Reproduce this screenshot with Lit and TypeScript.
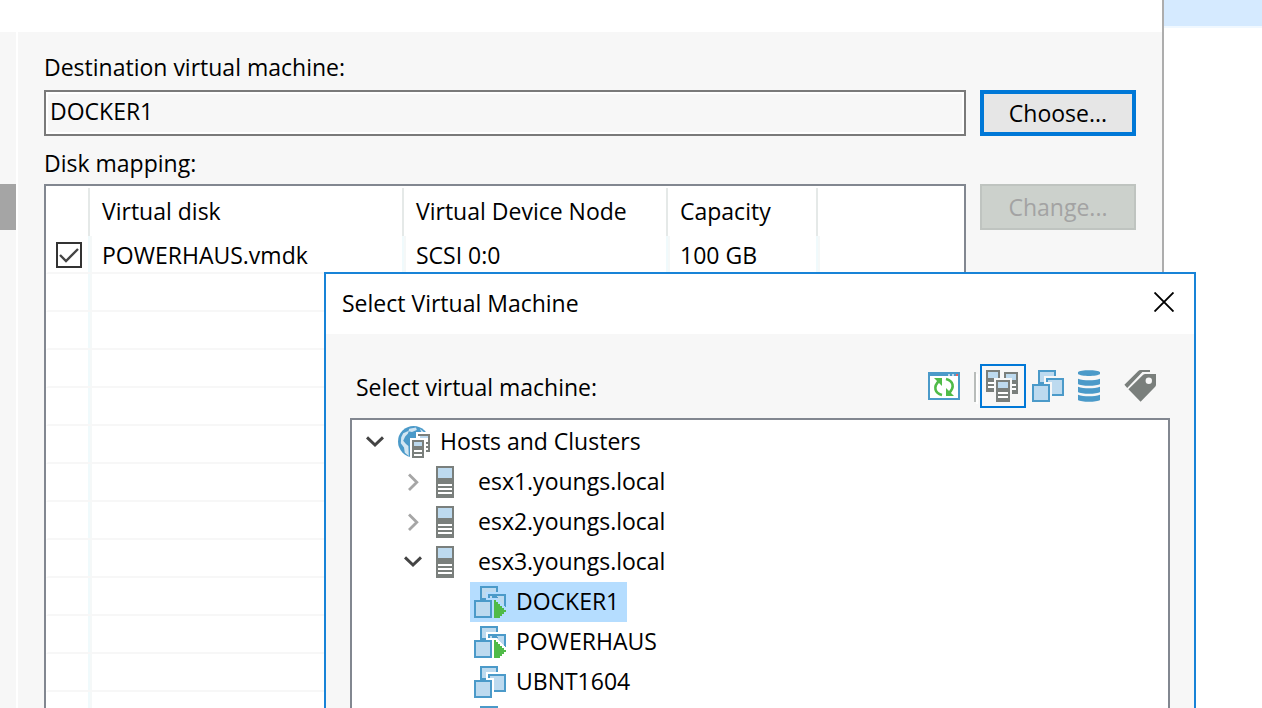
import { LitElement, html, svg, css, nothing } from "lit";
import { customElement, state } from "lit/decorators.js";

const hostIcon = html`<svg class="host-icon" viewBox="0 0 9 16" width="18" height="32" shape-rendering="crispEdges" aria-hidden="true">
  <rect width="9" height="16" fill="#7a7f7c" />
  <rect x="1" y="1" width="7" height="5" fill="#bddaef" />
  <rect x="1" y="9" width="7" height="1" fill="#fff" />
  <rect x="1" y="11" width="7" height="1" fill="#fff" />
  <rect x="1" y="13" width="7" height="1" fill="#fff" />
</svg>`;

const vmShapes = svg`
  <path d="M3 0h9v3h-6v4h-3z" fill="#4b9ac9" />
  <path d="M4 1h7v2h-5v3h-2z" fill="#bddaef" />
  <path d="M7 4h9v9h-6v-7h-3z" fill="#4b9ac9" />
  <path d="M8 5h7v7h-5v-6h-2z" fill="#bddaef" />
  <rect y="7" width="9" height="9" fill="#4b9ac9" />
  <rect x="1" y="8" width="7" height="7" fill="#bddaef" />`;

const vmIcon = (running: boolean) => html`<svg viewBox="0 0 16 16" width="32" height="32" shape-rendering="crispEdges" aria-hidden="true">
  ${vmShapes}
  ${running
    ? svg`<path class="halo" d="M9 6h2l5 5v5h-7z" /><path d="M15 4h1v6h-1zM9 5h6v1h-6z" fill="#4b9ac9" /><path d="M11 5h4v4z" fill="#bddaef" />
      <path d="M10 7h1v1h1v1h1v1h1v1h1v1h1v1h-1v1h-1v1h-1v1h-3z" fill="#50bb48" />`
    : nothing}
</svg>`;

const globeIcon = html`<svg viewBox="0 0 16 16" width="32" height="32" aria-hidden="true">
  <circle cx="7.8" cy="7.8" r="7.8" fill="#4b9ac9" />
  <path d="M2.6 3.6L5.4 2.4 5 3.8 3.6 5.2 2.6 7.4 4 9 5.2 10 5.4 15 3.4 13.4 3 10.8 1.4 8.6 1.6 5.6z" fill="#fff" opacity=".75" />
  <path d="M5.6 1.4L9 .8 9.4 2 7 3 5.2 2.6zM11 1.4L14 4 11.6 3z" fill="#cfe4f3" />
  <path d="M6 6h3V3h7v13H6z" fill="#fff" />
  <g shape-rendering="crispEdges">
    <path d="M10 4h6v9h-2v-1h1v-1h-1v-1h1V9h-1V8h1V5h-5z" fill="#7a7f7c" />
    <rect x="11" y="5" width="4" height="1" fill="#bddaef" />
    <rect x="7" y="7" width="6" height="9" fill="#7a7f7c" />
    <rect x="8" y="8" width="4" height="2" fill="#bddaef" />
    <path d="M8 12h4v1H8zM8 14h4v1H8z" fill="#fff" />
  </g>
</svg>`;

const refreshIcon = html`<svg viewBox="0 0 16 14" width="32" height="28" aria-hidden="true">
  <g shape-rendering="crispEdges">
    <rect width="16" height="14" fill="#4b9ac9" />
    <rect x="1" y="2" width="14" height="11" fill="#fff" />
    <path d="M10 1h1v1h-1zM12 1h1v1h-1z" fill="#bddaef" />
    <rect x="14" y="1" width="1" height="1" fill="#f0605c" />
  </g>
  <path d="M7 11.5C3.4 10.6 2.4 7.4 5.6 4.4M9 3.5C12.6 4.4 13.6 7.6 10.4 10.6" fill="none" stroke="#50bb48" stroke-width="1.3" />
  <path d="M3 3h4v4zM13 12H9V8z" fill="#50bb48" />
</svg>`;

const server = (x: number, y: number) => svg`
  <rect x=${x} y=${y} width="7" height="11" fill="#7a7f7c" />
  <rect x=${x + 1} y=${y + 1} width="5" height="3" fill="#bddaef" />
  <path d="M${x + 1} ${y + 6}h5v1h-5zM${x + 1} ${y + 8}h5v1h-5z" fill="#fff" />`;

const clustersIcon = html`<svg viewBox="0 0 16 16" width="32" height="32" shape-rendering="crispEdges" aria-hidden="true">
  ${server(0, 0)}${server(9, 1)}
  <rect x="4" y="4" width="9" height="12" fill="#f7f7f7" />
  ${server(5, 5)}
</svg>`;

const storageIcon = html`<svg viewBox="0 0 11 16" width="22" height="32" aria-hidden="true">
  <path d="M0 1C1 -.2 10 -.2 11 1V2C9.5 3.3 1.5 3.3 0 2z" fill="#4b9ac9" />
  ${[4, 8, 12].map(
    (y) => svg`<path d="M0 ${y + 0.4}C3 ${y + 1.4} 8 ${y + 1.4} 11 ${y + 0.4}V${y + 3}C9.5 ${y + 4.2} 1.5 ${y + 4.2} 0 ${y + 3}z" fill="#4b9ac9" />`,
  )}
</svg>`;

const tagIcon = html`<svg viewBox="0 0 16 16" width="32" height="32" aria-hidden="true">
  <path d="M.2 7.4L7 .6Q7.6 0 8.4 0H13V1H9.2L1.6 9z" fill="#7a7f7c" />
  <path d="M2.2 9.6L9.6 2.4Q10 2 10.6 2H16V7.4Q16 8 15.6 8.4L8.3 15.9z" fill="#7a7f7c" />
  <circle cx="12.4" cy="5.4" r="1.6" fill="#f7f7f7" />
</svg>`;

interface Disk {
  name: string;
  node: string;
  capacity: string;
}

@customElement("select-vm-dialog")
export class SelectVmDialog extends LitElement {
  static styles = css`
    :host {
      display: flex;
      flex-direction: column;
      box-sizing: border-box;
      border: 2px solid #1883d7;
      background: #f7f7f7;
      color: #000;
    }
    .titlebar {
      box-sizing: border-box;
      display: flex;
      align-items: center;
      justify-content: space-between;
      height: 60px;
      flex: none;
      padding: 0 20px 2px 16px;
      background: #fff;
    }
    h2 {
      margin: 0;
      font: inherit;
    }
    button {
      display: flex;
      align-items: center;
      justify-content: center;
      box-sizing: border-box;
      margin: 0;
      padding: 0;
      border: 0;
      background: none;
      font: inherit;
      color: inherit;
    }
    .close {
      padding-bottom: 2px;
    }
    .body {
      display: flex;
      flex-direction: column;
      gap: 10px;
      flex: 1;
      min-height: 0;
      padding: 30px 24px 0;
    }
    .bar {
      display: flex;
      align-items: center;
      justify-content: space-between;
      padding: 0 14px 0 6px;
    }
    .prompt {
      padding-top: 2px;
    }
    .tools {
      display: flex;
      align-items: center;
      height: 44px;
    }
    .separator {
      width: 2px;
      height: 30px;
      margin: 2px 4px 0 14px;
      background: #b8bcba;
      box-shadow: 2px 2px 0 #fff;
    }
    .active {
      width: 46px;
      height: 44px;
      margin-right: 6px;
      padding-right: 2px;
      border: 2px solid #0078d7;
    }
    .storage {
      margin: 0 24px 0 14px;
    }
    .tree {
      flex: 1;
      min-height: 0;
      margin: 0;
      padding: 2px 14px;
      border: 2px solid #828790;
      background: #fff;
      overflow: hidden;
    }
    ul {
      margin: 0;
      padding: 0 0 0 38px;
      list-style: none;
    }
    li {
      list-style: none;
    }
    .row {
      display: flex;
      align-items: center;
      height: 40px;
    }
    .toggle {
      width: 18px;
      height: 18px;
      margin-right: 14px;
    }
    .glyph {
      display: flex;
      width: 42px;
    }
    .name {
      padding-bottom: 2px;
    }
    .vm {
      width: max-content;
      margin-left: 28px;
      padding: 0 8px 0 4px;
    }
    .chosen {
      background: #b5ddff;
    }
    .halo {
      fill: #fff;
    }
    .chosen .halo {
      fill: #b5ddff;
    }
    svg {
      display: block;
    }
  `;

  private hosts = [
    { name: "esx1.youngs.local", open: false, vms: [] },
    { name: "esx2.youngs.local", open: false, vms: [] },
    {
      name: "esx3.youngs.local",
      open: true,
      vms: [
        { name: "DOCKER1", running: true },
        { name: "POWERHAUS", running: true },
        { name: "UBNT1604", running: false },
        { name: "", running: false },
      ],
    },
  ];

  @state() private chosen = "DOCKER1";

  private toggle(open: boolean) {
    return html`<button class="toggle" aria-label=${open ? "Collapse" : "Expand"}>
      <svg viewBox="0 0 9 9" width="18" height="18" fill="none" aria-hidden="true">
        ${open
          ? svg`<path d="M.5 2.2L4.5 6 8.5 2.2" stroke="#444" stroke-width="1.5" />`
          : svg`<path d="M2.5 .7L6.4 4.6 2.5 8.5" stroke="#a6a6a6" stroke-width="1.4" />`}
      </svg>
    </button>`;
  }

  render() {
    return html`
      <div class="titlebar">
        <h2>Select Virtual Machine</h2>
        <button class="close" aria-label="Close">
          <svg viewBox="0 0 20 20" width="20" height="20" aria-hidden="true">
            <path d="M.5 .5L19.5 19.5M19.5 .5L.5 19.5" stroke="#000" stroke-width="1.9" />
          </svg>
        </button>
      </div>
      <div class="body">
        <div class="bar">
          <span class="prompt" id="prompt">Select virtual machine:</span>
          <div class="tools">
            <button aria-label="Refresh">${refreshIcon}</button>
            <span class="separator"></span>
            <button class="active" aria-label="Hosts and Clusters view">${clustersIcon}</button>
            <button aria-label="Virtual machines view">${vmIcon(false)}</button>
            <button class="storage" aria-label="Storage view">${storageIcon}</button>
            <button aria-label="Tags view">${tagIcon}</button>
          </div>
        </div>
        <ul class="tree" aria-labelledby="prompt">
          <li>
            <div class="row">${this.toggle(true)}<span class="glyph">${globeIcon}</span><span class="name">Hosts and Clusters</span></div>
            <ul>
              ${this.hosts.map(
                (h) => html`<li>
                  <div class="row">${this.toggle(h.open)}<span class="glyph">${hostIcon}</span><span class="name">${h.name}</span></div>
                  ${h.vms.length
                    ? html`<ul>
                        ${h.vms.map(
                          (vm) => html`<li>
                            <button
                              class="row vm ${vm.name === this.chosen ? "chosen" : ""}"
                              @click=${() => (this.chosen = vm.name)}
                            >
                              <span class="glyph">${vmIcon(vm.running)}</span><span class="name">${vm.name}</span>
                            </button>
                          </li>`,
                        )}
                      </ul>`
                    : nothing}
                </li>`,
              )}
            </ul>
          </li>
        </ul>
      </div>
    `;
  }
}

@customElement("app-root")
export class AppRoot extends LitElement {
  static styles = css`
    :host {
      display: grid;
      grid-template-columns: minmax(0, 1fr) 98px;
      position: relative;
      height: 100vh;
      overflow: hidden;
      background: #fff;
      color: #000;
      font: 23px/30px "Open Sans", "Noto Sans", sans-serif;
    }
    .window {
      display: flex;
      flex-direction: column;
      min-height: 0;
      border-right: 2px solid #adadad;
    }
    .header {
      height: 32px;
      flex: none;
    }
    .main {
      display: flex;
      gap: 2px;
      flex: 1;
      min-height: 0;
    }
    .rail {
      width: 16px;
      padding-top: 152px;
      background: #f7f7f7;
    }
    .thumb {
      height: 46px;
      background: #a5a5a5;
    }
    .content {
      display: grid;
      grid-template-columns: minmax(0, 1fr) 156px;
      grid-template-rows: auto auto auto minmax(0, 1fr);
      column-gap: 14px;
      flex: 1;
      min-height: 0;
      padding: 20px 26px 0;
      background: #f7f7f7;
    }
    .label {
      grid-column: 1 / -1;
      padding-bottom: 8px;
    }
    .sub {
      padding: 12px 0 6px;
    }
    .field {
      box-sizing: border-box;
      width: 100%;
      height: 46px;
      margin: 0;
      padding: 0 4px 4px;
      border: 2px solid #7a7a7a;
      border-radius: 0;
      outline: none;
      background: #f7f7f7;
      box-shadow: inset 0 0 0 2px #fff;
      font: inherit;
      color: inherit;
    }
    .btn {
      box-sizing: border-box;
      height: 46px;
      margin: 0;
      padding: 0;
      border: 4px solid #0078d7;
      background: #e6e6e6;
      font: inherit;
      color: #000;
    }
    .btn:disabled {
      border: 2px solid #bfc4c0;
      background: #ccd1cc;
      color: #a3a3a3;
    }
    .list {
      border: 2px solid #828790;
      border-bottom: 0;
      background: #fff;
      overflow: hidden;
    }
    table {
      width: 100%;
      table-layout: fixed;
      border-collapse: separate;
      border-spacing: 0;
    }
    .c-check {
      width: 44px;
    }
    .c-name {
      width: 314px;
    }
    .c-node {
      width: 264px;
    }
    .c-cap {
      width: 150px;
    }
    th {
      box-sizing: border-box;
      height: 50px;
      padding: 0 12px;
      text-align: left;
      font-weight: normal;
      background: linear-gradient(#e5e9e8, #e5e9e8) right bottom / 2px 48px no-repeat;
    }
    td {
      box-sizing: border-box;
      height: 38px;
      padding: 2px 12px 0 10px;
      border-bottom: 2px solid #f7f7f7;
      border-left: 2px solid #f5f8f8;
      background: linear-gradient(#f0fafc, #f0fafc) right / 2px 100% no-repeat;
    }
    td:first-child {
      border-left-color: #fff;
      padding: 2px 0 0 8px;
    }
    th:last-child,
    td:last-child {
      background: none;
    }
    .tick {
      display: block;
      appearance: none;
      box-sizing: border-box;
      width: 26px;
      height: 26px;
      margin: 0;
      border: 2px solid #333;
      background: #fff;
    }
    .tick:checked {
      background: #fff
        url("data:image/svg+xml,%3Csvg xmlns='http://www.w3.org/2000/svg' viewBox='0 0 22 22'%3E%3Cpath d='M2 11l6 6L20 5' fill='none' stroke='%23444' stroke-width='2.4'/%3E%3C/svg%3E")
        center / 22px 22px no-repeat;
    }
    .desktop-strip {
      height: 26px;
      background: #d5eaff;
      border-bottom: 2px solid #f0f8ff;
    }
    .dialog {
      position: absolute;
      inset: 272px 66px -40px 324px;
    }
  `;

  private disks: Disk[] = [{ name: "POWERHAUS.vmdk", node: "SCSI 0:0", capacity: "100 GB" }];

  render() {
    return html`
      <section class="window">
        <div class="header"></div>
        <div class="main">
          <div class="rail"><div class="thumb"></div></div>
          <div class="content">
            <label class="label" for="destination">Destination virtual machine:</label>
            <input class="field" id="destination" readonly value="DOCKER1" />
            <button class="btn">Choose...</button>
            <div class="label sub" id="mapping">Disk mapping:</div>
            <div class="list">
              <table aria-labelledby="mapping">
                <colgroup>
                  <col class="c-check" />
                  <col class="c-name" />
                  <col class="c-node" />
                  <col class="c-cap" />
                  <col />
                </colgroup>
                <thead>
                  <tr>
                    <th></th>
                    <th>Virtual disk</th>
                    <th>Virtual Device Node</th>
                    <th>Capacity</th>
                    <th></th>
                  </tr>
                </thead>
                <tbody>
                  ${this.disks.map(
                    (d) => html`<tr>
                      <td><input class="tick" type="checkbox" checked aria-label=${d.name} /></td>
                      <td>${d.name}</td>
                      <td>${d.node}</td>
                      <td>${d.capacity}</td>
                      <td></td>
                    </tr>`,
                  )}
                  ${Array.from({ length: 12 }, () => html`<tr><td></td><td></td><td></td><td></td><td></td></tr>`)}
                </tbody>
              </table>
            </div>
            <button class="btn" disabled>Change...</button>
          </div>
        </div>
      </section>
      <div><div class="desktop-strip"></div></div>
      <select-vm-dialog class="dialog" role="dialog" aria-label="Select Virtual Machine"></select-vm-dialog>
    `;
  }
}
